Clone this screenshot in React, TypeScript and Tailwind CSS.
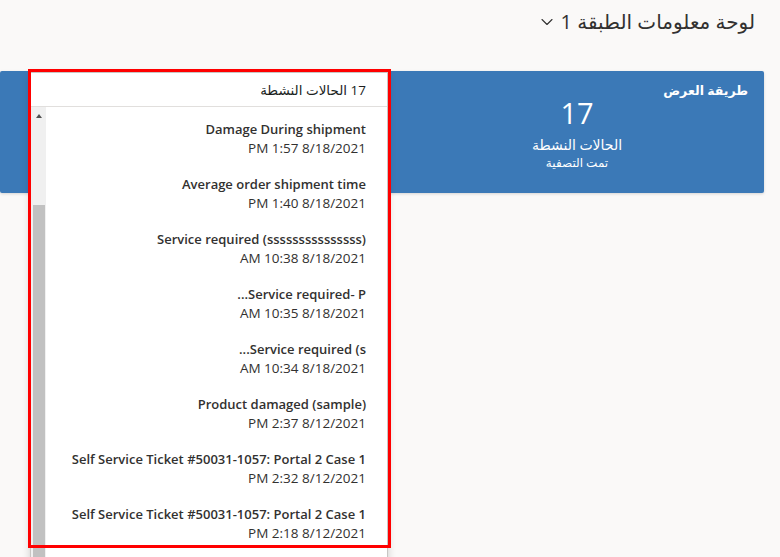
import { ChevronDown } from 'lucide-react';

const cases = [
  { title: 'Damage During shipment', date: '8/18/2021 1:57 PM' },
  { title: 'Average order shipment time', date: '8/18/2021 1:40 PM' },
  { title: 'Service required (sssssssssssssss)', date: '8/18/2021 10:38 AM' },
  { title: 'Service required- P...', date: '8/18/2021 10:35 AM' },
  { title: 'Service required (s...', date: '8/18/2021 10:34 AM' },
  { title: 'Product damaged (sample)', date: '8/12/2021 2:37 PM' },
  { title: 'Self Service Ticket #50031-1057: Portal 2 Case 1', date: '8/12/2021 2:32 PM' },
  { title: 'Self Service Ticket #50031-1057: Portal 2 Case 1', date: '8/12/2021 2:18 PM' },
];

export default function App() {
  return (
    <div
      dir="rtl"
      className="relative h-[557px] w-[780px] overflow-hidden bg-[#faf9f8] text-[#323130]"
      style={{ fontFamily: '"Open Sans", "DejaVu Sans", sans-serif' }}
    >
      {/* Page title */}
      <div className="flex h-[44px] items-center gap-[4px] pr-[25px]">
        <h1 className="text-[20px] font-normal leading-[28px]">لوحة معلومات الطبقة 1</h1>
        <ChevronDown className="h-[20px] w-[20px] text-[#323130]" strokeWidth={1.3} />
      </div>

      {/* Stats card */}
      <div className="relative mr-[16px] mt-[27px] flex h-[122px] w-[764px] rounded-[2px] bg-[#3b79b7] text-white shadow-[0_1px_3px_rgba(0,0,0,0.15)]">
        <span className="absolute right-[16px] top-[11px] text-[12.5px] font-semibold leading-[18px]">طريقة العرض</span>
        <div className="flex w-[374px] flex-col items-center pt-[26px]">
          <span className="text-[29px] font-normal leading-[32px]">17</span>
          <span className="mt-[6px] text-[14px] leading-[20px]">الحالات النشطة</span>
          <span className="text-[12px] leading-[16px]">تمت التصفية</span>
        </div>
      </div>

      {/* Dropdown list */}
      <div className="absolute left-[30px] top-[72px] flex h-[520px] w-[358px] flex-col border border-[#c8c6c4] bg-white shadow-[0_3px_8px_rgba(0,0,0,0.18)]">
        <div className="flex h-[34px] shrink-0 items-center border-b border-[#e1dfdd] pr-[21px] text-[13.5px] leading-[18px] text-[#201f1e]">
          17 الحالات النشطة
        </div>
        <div className="flex min-h-0 flex-1">
          <div className="flex-1 pr-[21px] pt-[13px]">
            <ul className="flex flex-col gap-[17px]">
              {cases.map((c, i) => (
                <li key={i} className="leading-[19px]">
                  <div className="text-[13px] font-semibold text-[#323130]">{c.title}</div>
                  <div className="text-[13.5px] text-[#323130]">{c.date}</div>
                </li>
              ))}
            </ul>
          </div>
          <div className="flex w-[15px] shrink-0 flex-col items-center bg-[#f0f0f0]">
            <div className="mt-[7px] h-0 w-0 border-x-[3.5px] border-b-[4px] border-x-transparent border-b-[#505050]" />
            <div className="mt-[87px] w-[12px] flex-1 bg-[#c1c1c1]" />
          </div>
        </div>
      </div>

      {/* Highlight frame */}
      <div className="pointer-events-none absolute left-[28px] top-[69px] h-[479px] w-[363px] border-[3px] border-[#ff0000]" />
    </div>
  );
}
